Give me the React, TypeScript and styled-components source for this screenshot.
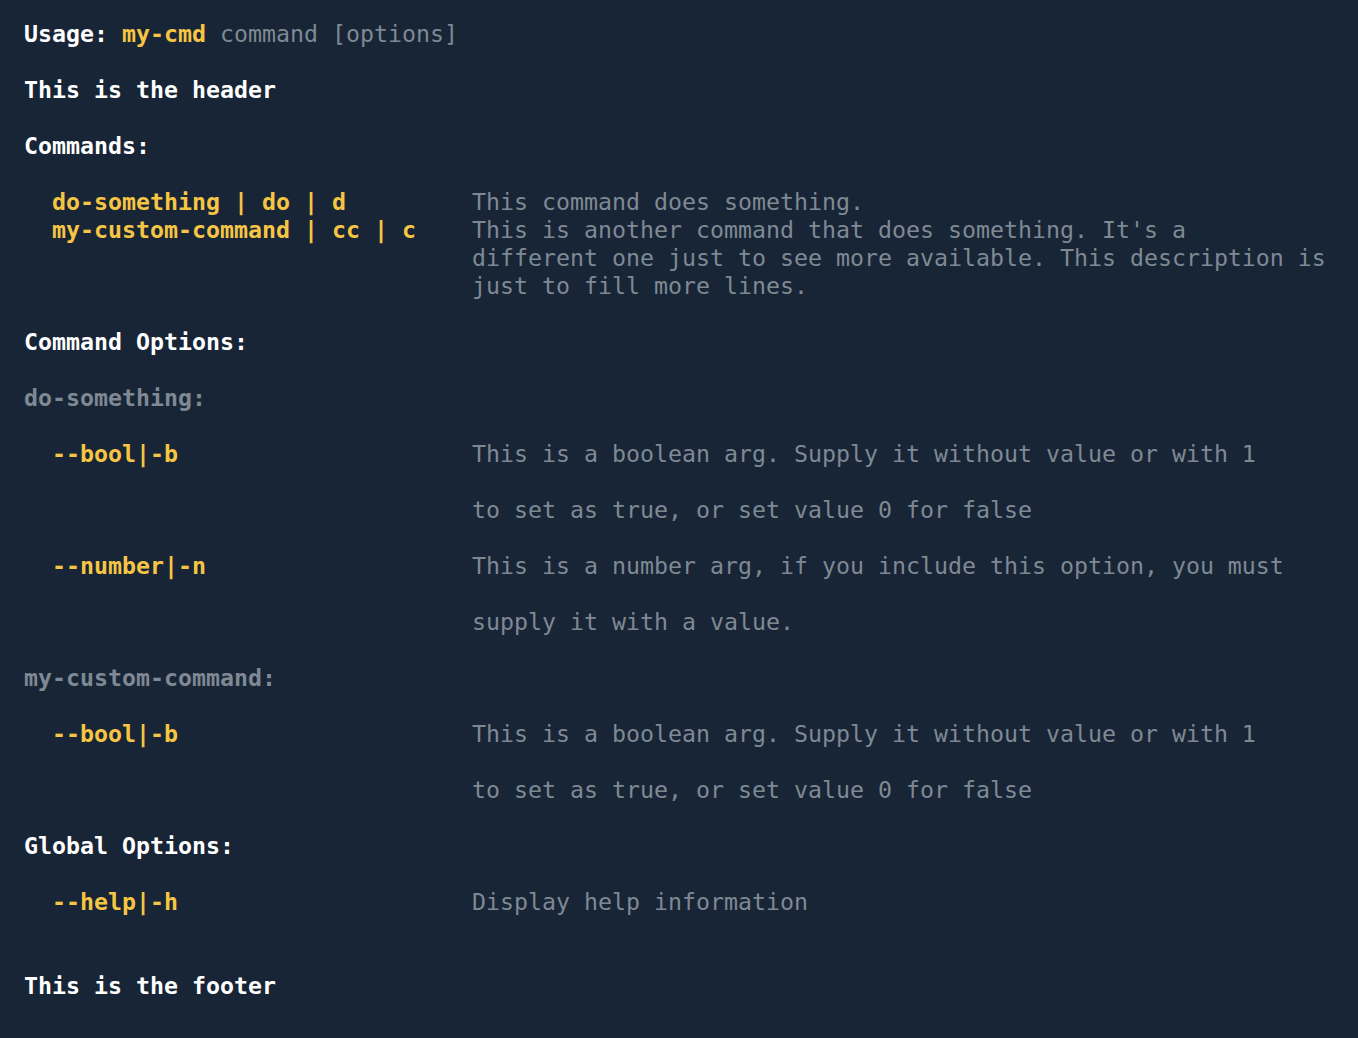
import React from "react";
import styled, { createGlobalStyle } from "styled-components";

const LINE = 28;
const CH = 14;

const Global = createGlobalStyle`
  html, body {
    margin: 0;
    padding: 0;
    background: #182536;
  }
  body {
    min-height: 100vh;
  }
`;

const Terminal = styled.div`
  box-sizing: border-box;
  min-height: 1038px;
  padding: 20px 24px;
  background: #182536;
  color: #ffffff;
  font-family: "DejaVu Sans Mono", "Liberation Mono", monospace;
  font-size: 23.25px;
  line-height: ${LINE}px;
  white-space: pre;
  display: flex;
  flex-direction: column;
  gap: ${LINE}px;
`;

const Line = styled.div`
  height: ${LINE}px;
`;

const Strong = styled.span`
  font-weight: 700;
  color: #ffffff;
`;

const Accent = styled.span<{ $bold?: boolean }>`
  color: #f7c544;
  font-weight: ${(p) => (p.$bold ? 700 : 400)};
`;

const Muted = styled.span<{ $bold?: boolean }>`
  color: #7f8994;
  font-weight: ${(p) => (p.$bold ? 700 : 400)};
`;

const Group = styled.div<{ $gap?: number }>`
  display: flex;
  flex-direction: column;
  gap: ${(p) => (p.$gap ?? 0) * LINE}px;
`;

const Row = styled.div`
  display: grid;
  grid-template-columns: ${30 * CH}px 1fr;
  padding-left: ${2 * CH}px;
`;

const Name = styled.div`
  color: #f7c544;
  font-weight: 700;
`;

const Desc = styled.div`
  color: #7f8994;
  display: flex;
  flex-direction: column;
`;

const Spacer = styled.div<{ $lines: number }>`
  height: ${(p) => p.$lines * LINE}px;
`;

type Opt = { name: string; desc: string[] };

const boolDesc = [
  "This is a boolean arg. Supply it without value or with 1",
  "",
  "to set as true, or set value 0 for false",
];

const commandOptions: { cmd: string; opts: Opt[] }[] = [
  {
    cmd: "do-something:",
    opts: [
      { name: "--bool|-b", desc: boolDesc },
      {
        name: "--number|-n",
        desc: [
          "This is a number arg, if you include this option, you must",
          "",
          "supply it with a value.",
        ],
      },
    ],
  },
  {
    cmd: "my-custom-command:",
    opts: [{ name: "--bool|-b", desc: boolDesc }],
  },
];

const OptionRow = ({ opt }: { opt: Opt }) => (
  <Row>
    <Name>{opt.name}</Name>
    <Desc>
      {opt.desc.map((d, i) => (
        <Line key={i}>{d}</Line>
      ))}
    </Desc>
  </Row>
);

export default function App() {
  return (
    <>
      <Global />
      <Terminal>
        <Line>
          <Strong>Usage: </Strong>
          <Accent $bold>my-cmd</Accent>
          <Muted> command [options]</Muted>
        </Line>
        <Line>
          <Strong>This is the header</Strong>
        </Line>
        <Group $gap={1}>
          <Line>
            <Strong>Commands:</Strong>
          </Line>
          <Group>
            <Row>
              <Name>do-something | do | d</Name>
              <Desc>
                <Line>This command does something.</Line>
              </Desc>
            </Row>
            <Row>
              <Name>my-custom-command | cc | c</Name>
              <Desc>
                <Line>This is another command that does something. It's a</Line>
                <Line>different one just to see more available. This description is</Line>
                <Line>just to fill more lines.</Line>
              </Desc>
            </Row>
          </Group>
        </Group>
        <Group $gap={1}>
          <Line>
            <Strong>Command Options:</Strong>
          </Line>
          {commandOptions.map((c) => (
            <Group $gap={1} key={c.cmd}>
              <Line>
                <Muted $bold>{c.cmd}</Muted>
              </Line>
              {c.opts.map((o) => (
                <OptionRow key={o.name} opt={o} />
              ))}
            </Group>
          ))}
        </Group>
        <Group $gap={1}>
          <Line>
            <Strong>Global Options:</Strong>
          </Line>
          <OptionRow opt={{ name: "--help|-h", desc: ["Display help information"] }} />
          <Spacer $lines={0} />
        </Group>
        <Line>
          <Strong>This is the footer</Strong>
        </Line>
      </Terminal>
    </>
  );
}
